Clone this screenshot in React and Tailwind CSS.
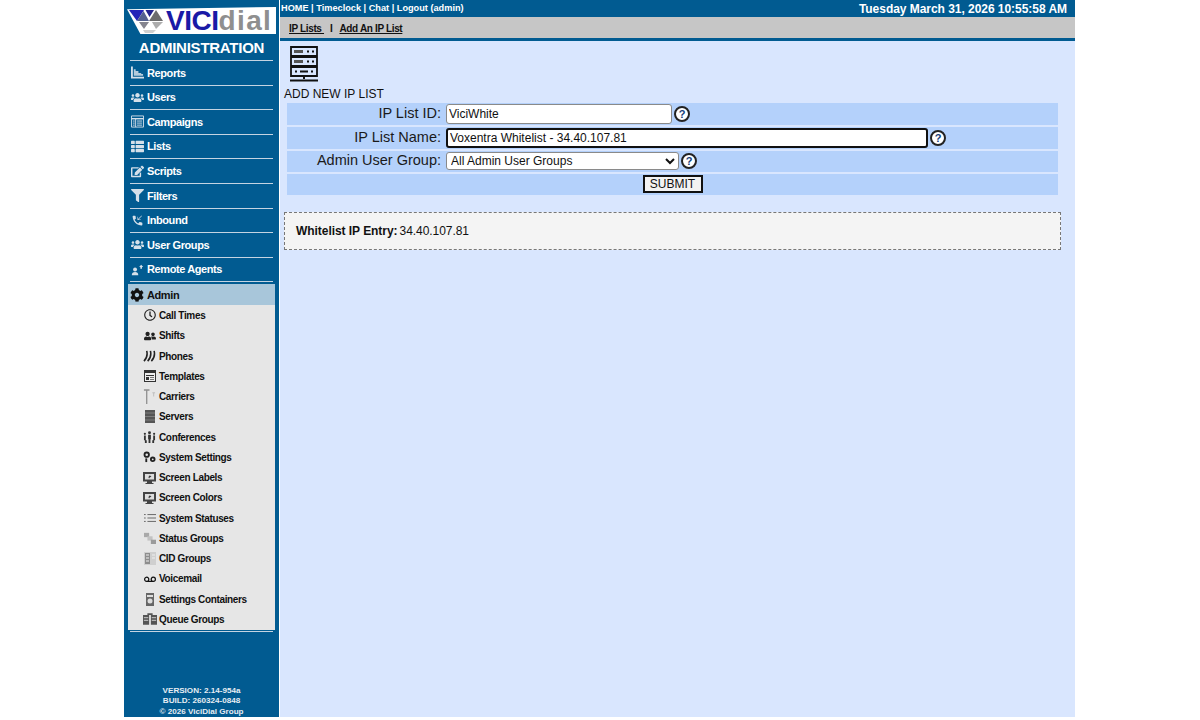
import React from 'react';
import { FaUsers, FaThList, FaEdit, FaFilter, FaCog, FaRegClock, FaUserFriends, FaVoicemail } from 'react-icons/fa';
import { MdPhoneCallback } from 'react-icons/md';

const ReportsIcon = () => (
  <svg viewBox="0 0 14 13" fill="currentColor">
    <path d="M0 0h2v11h12v2H0z" />
    <path d="M3 3h2v7H3zM5 5h3v5H5zM8 7h3v3H8zM11 8h2v2h-2z" opacity="0.85" />
  </svg>
);

const CampaignsIcon = () => (
  <svg viewBox="0 0 14 13" fill="none" stroke="currentColor">
    <path d="M.5 .5h13v12H.5z" strokeWidth="1" />
    <path d="M.5 3.500h13" strokeWidth="1.5" />
    <path d="M5 3.500v9M6.500 6h5.500M6.500 8.200h5.500M6.500 10.400h5.500M2 6h2M2 8.200h2M2 10.400h2" strokeWidth="1" />
  </svg>
);

const RemoteIcon = () => (
  <svg viewBox="0 0 16 14" fill="currentColor">
    <circle cx="5" cy="7" r="2.400" />
    <path d="M1 14c0-3 1.500-4 4-4s4 1 4 4z" />
    <path d="M12.500 1l2.500 3h-5zM11.500 4h2v2h-2z" />
  </svg>
);

const PhonesIcon = () => (
  <svg viewBox="0 0 14 13" className="w-[13px] h-[12px]" fill="none" stroke="currentColor" strokeWidth="1.700">
    <path d="M4 1c1 4 0 8-3 11M8 1c1 4 0 8-3 11M12 1c1 4 0 8-3 11" />
  </svg>
);

const TemplatesIcon = () => (
  <svg viewBox="0 0 12 12" className="w-[12px] h-[12px]">
    <path d="M0 0h12v12H0z" fill="#333" />
    <path d="M1 3h10v8H1z" fill="#eee" />
    <path d="M2 5h8v1H2zM2 7h3v3H2z" fill="#333" />
    <path d="M6 7h4v1H6zM6 9h4v1H6z" fill="#777" />
  </svg>
);

const CarriersIcon = () => (
  <svg viewBox="0 0 14 16" className="w-[13px] h-[15px]" fill="none" stroke="#8f8f8f">
    <path d="M1 1h6M4 1v15" strokeWidth="1.400" />
    <path d="M10 4h3M11.500 4v4" stroke="#bdbdbd" />
  </svg>
);

const ServersIcon = () => (
  <svg viewBox="0 0 10 13" className="w-[10px] h-[13px]">
    <path d="M0 0h10v13H0z" fill="#555" />
    <path d="M0 3h10M0 6.500h10M0 10h10" stroke="#888" strokeWidth="0.800" />
  </svg>
);

const ConferencesIcon = () => (
  <svg viewBox="0 0 14 13" className="w-[13px] h-[12px]" fill="currentColor">
    <circle cx="7" cy="2" r="1.600" />
    <path d="M5.500 4h3v5h-3zM6 9h2v4H6z" />
    <circle cx="2" cy="3" r="1.200" />
    <circle cx="12" cy="3" r="1.200" />
    <path d="M1 5h2v5h1v3H2v-3H1zM11 5h2v5h-1v3h-2v-3h1z" />
  </svg>
);

const GearsIcon = () => (
  <svg viewBox="0 0 14 13" className="w-[13px] h-[12px]" fill="none" stroke="currentColor" strokeWidth="2">
    <circle cx="4" cy="4" r="2.400" />
    <circle cx="10.500" cy="9" r="2" />
    <path d="M3.500 8v4" />
  </svg>
);

const ScreenIcon = () => (
  <svg viewBox="0 0 13 12" className="w-[13px] h-[12px]">
    <path d="M0 0h13v9.500H0zM4 9.500h5V11h1.500v1h-8v-1H4z" fill="#444" />
    <path d="M2 2h9v5.500H2z" fill="#ddd" />
    <path d="M7.500 2.500L5 5.500h1.500L5.500 7l3-3H7z" fill="#333" />
  </svg>
);

const StatusLinesIcon = () => (
  <svg viewBox="0 0 14 11" className="w-[12px] h-[10px]" stroke="#555">
    <path d="M4 1.500h10M4 5.500h10M4 9.500h10M0 1.500h2M0 5.500h2M0 9.500h2" />
  </svg>
);

const StatusGroupsIcon = () => (
  <svg viewBox="0 0 14 14" className="w-[12px] h-[12px]" fill="#a9a9a9">
    <path d="M0 1h6v5H0z" />
    <path d="M4 5h6v5H4z" fill="#c2c2c2" />
    <path d="M8 9h6v5H8z" fill="#9b9b9b" />
  </svg>
);

const CidIcon = () => (
  <svg viewBox="0 0 12 13" className="w-[12px] h-[13px]">
    <path d="M0 0h12v13H0z" fill="#cfcfcf" />
    <path d="M1 1h5v11H1z" fill="#8d8d8d" />
    <path d="M2 3h3M2 6h3M2 9h3M8 3h3M8 6h3" stroke="#eee" />
  </svg>
);

const ContainerIcon = () => (
  <svg viewBox="0 0 10 13" className="w-[10px] h-[13px]" fill="#666">
    <path d="M1 0h8v13H1z" />
    <circle cx="5" cy="8" r="2.500" fill="#ddd" />
    <path d="M2 2h6v2H2z" fill="#ddd" />
  </svg>
);

const QueueIcon = () => (
  <svg viewBox="0 0 16 13" className="w-[14px] h-[12px]" fill="#555">
    <path d="M0 2h7v11H0zM9 2h7v11H9zM5 0h6v2H5z" />
    <path d="M1 5h5M1 8h5M10 5h5M10 8h5" stroke="#ddd" />
  </svg>
);

const mainMenu = [
  ['Reports', ReportsIcon],
  ['Users', FaUsers],
  ['Campaigns', CampaignsIcon],
  ['Lists', FaThList],
  ['Scripts', FaEdit],
  ['Filters', FaFilter],
  ['Inbound', MdPhoneCallback],
  ['User Groups', FaUsers],
  ['Remote Agents', RemoteIcon],
];

const subMenu = [
  ['Call Times', FaRegClock, 'text-[#222]'],
  ['Shifts', FaUserFriends, 'text-[#222]'],
  ['Phones', PhonesIcon, 'text-[#222]'],
  ['Templates', TemplatesIcon, ''],
  ['Carriers', CarriersIcon, ''],
  ['Servers', ServersIcon, ''],
  ['Conferences', ConferencesIcon, 'text-[#333]'],
  ['System Settings', GearsIcon, 'text-[#222]'],
  ['Screen Labels', ScreenIcon, ''],
  ['Screen Colors', ScreenIcon, ''],
  ['System Statuses', StatusLinesIcon, ''],
  ['Status Groups', StatusGroupsIcon, ''],
  ['CID Groups', CidIcon, ''],
  ['Voicemail', FaVoicemail, 'text-[#111]'],
  ['Settings Containers', ContainerIcon, ''],
  ['Queue Groups', QueueIcon, ''],
];

const Logo = () => (
  <div className="ml-[3px] mt-[7px] w-[149px] h-[27px] bg-white flex items-center [clip-path:polygon(0_8%,100%_0,100%_100%,9%_100%)]">
    <svg viewBox="0 0 39 27" className="w-[39px] h-[27px] shrink-0">
      <path d="M2 3h15l-7 11z" fill="#2424b8" />
      <path d="M18.500 3H27l-4.500 7z" fill="#23238f" />
      <path d="M29 3l7 11H22z" fill="#6c6c6c" />
      <path d="M10 14h12L16.500 4z" fill="#54618f" />
      <path d="M12 15h10l-5 7z" fill="#85858f" />
      <path d="M25 15h11l-7 7z" fill="#adadad" />
      <path d="M16 23h13l-3 3h-8z" fill="#cfcfcf" />
    </svg>
    <span className="text-[28px] leading-[28px] font-bold text-[#1a1aa6] tracking-[-0.5px]">VICI</span>
    <span className="text-[28px] leading-[28px] font-bold text-[#8f8f8f] tracking-[1.400px]">dial</span>
  </div>
);

const MenuRow = ({ label, icon: Icon }) => (
  <div className="h-[24.6px] border-b border-[#c4d4e2] flex items-center text-white text-[11px] font-bold tracking-[-0.4px]">
    <span className="w-[17px] pr-[3px] flex justify-center text-[#d5e0ea] [&_svg]:w-[13px] [&_svg]:h-[13px]">
      <Icon />
    </span>
    {label}
  </div>
);

const SubRow = ({ label, icon: Icon, color }) => (
  <div className="h-[20.27px] flex items-center pl-[14px] gap-[2px] text-[#111] text-[10px] font-bold tracking-[-0.35px]">
    <span className={`w-[15px] flex justify-center text-[12px] ${color}`}>
      <Icon />
    </span>
    {label}
  </div>
);

const Sidebar = () => (
  <aside className="w-[155px] shrink-0 bg-[#015b91] flex flex-col">
    <Logo />
    <div className="mx-[6px] mt-[2px] w-[143px]">
      <div className="h-[25px] border-b border-[#c4d4e2] flex items-center justify-center text-white text-[15px] font-bold tracking-[-0.25px]">
        ADMINISTRATION
      </div>
      {mainMenu.map(([label, icon]) => (
        <MenuRow key={label} label={label} icon={icon} />
      ))}
    </div>
    <div className="ml-[4px] mt-[2px] w-[147px] bg-[#e6e6e6]">
      <div className="h-[21px] bg-[#a8c6da] flex items-center gap-[2px] pl-[2px] text-[#111] text-[11px] font-bold tracking-[-0.4px]">
        <FaCog className="w-[14px] h-[14px] text-[#111]" />
        <span className="ml-[1px]">Admin</span>
      </div>
      {subMenu.map(([label, icon, color]) => (
        <SubRow key={label} label={label} icon={icon} color={color} />
      ))}
    </div>
    <div className="mx-[6px] mt-[1px] w-[143px] border-b border-[#c4d4e2]" />
    <div className="mt-auto text-center text-[#e6edf3] text-[8.1px] leading-[10.3px] font-bold">
      <div>VERSION: 2.14-954a</div>
      <div>BUILD: 260324-0848</div>
      <div>© 2026 ViciDial Group</div>
    </div>
  </aside>
);

const HelpIcon = () => (
  <span className="w-[16px] h-[16px] rounded-full border-2 border-[#222] bg-white flex items-center justify-center text-[11px] leading-none font-bold text-[#14407a]">
    ?
  </span>
);

const FormRow = ({ label, className, children }) => (
  <div className={`flex gap-[1px] ${className}`}>
    <div className="w-[155px] flex items-center justify-end pr-[1px] text-[14.5px] text-[#1a1a1a] whitespace-nowrap">{label}</div>
    <div className="flex-1 flex items-center gap-[2px] pl-[3px]">{children}</div>
  </div>
);

const ServerGlyph = () => (
  <svg viewBox="0 0 28 36" className="w-[28px] h-[36px]" fill="none" stroke="#111" strokeWidth="1.800">
    <path d="M1 1h26v9H1zM1 11h26v9H1zM1 21h26v9H1z" />
    <path d="M4 4h9v3H4zM4 14h9v3H4z" fill="#555" stroke="none" />
    <path d="M17 5.500h2M22 5.500h2M17 15.500h2M22 15.500h2M5 25.500h2M10 25.500h8M21 25.500h2" strokeWidth="2" />
    <path d="M14 30v3M0 34.500h28" strokeWidth="2" />
  </svg>
);

export default function App() {
  return (
    <div className="min-h-screen bg-white font-['Liberation_Sans',Arial,sans-serif]">
      <div className="ml-[124px] w-[951px] h-[717px] flex">
        <Sidebar />
        <main className="flex-1 flex flex-col ml-[1px] bg-[#d9e6fe]">
          <div className="h-[17px] bg-[#015b91] flex items-center justify-between pl-[1px] pr-[8px] text-white font-bold">
            <span className="text-[9.2px]">HOME | Timeclock | Chat | Logout (admin)</span>
            <span className="text-[12px] tracking-[-0.04px]">Tuesday March 31, 2026 10:55:58 AM</span>
          </div>
          <div className="h-[21px] bg-[#c6c6c6] flex items-center pl-[9px] pt-[2px] text-[10px] font-bold text-[#111] tracking-[-0.35px]">
            <span className="underline">IP Lists&nbsp;</span>
            <span className="mx-[6px]">I</span>
            <span className="underline ml-[1px]">Add An IP List</span>
          </div>
          <div className="h-[3px] bg-[#015b91]" />
          <div className="flex-1 pl-[4px] pr-[14px] pt-[5px]">
            <div className="pl-[6px]">
              <ServerGlyph />
            </div>
            <div className="mt-[5px] h-[14px] text-[12px] leading-[14px] text-[#111]">ADD NEW IP LIST</div>
            <div className="ml-[3px] mr-[3px] mt-[2px] flex flex-col gap-[2px]">
              <FormRow label="IP List ID:" className="h-[22px] bg-[#b4d1fb]">
                <input readOnly value="ViciWhite" className="w-[226px] h-[20px] px-[2px] bg-white border border-[#8a8a8a] rounded-[3px] text-[12px] text-[#111] outline-none" />
                <HelpIcon />
              </FormRow>
              <FormRow label="IP List Name:" className="h-[22px] bg-[#b4d1fb]">
                <input readOnly value="Voxentra Whitelist - 34.40.107.81" className="w-[482px] h-[20px] px-[2px] bg-white border-2 border-[#111] rounded-[3px] text-[12px] text-[#111] outline-none" />
                <HelpIcon />
              </FormRow>
              <FormRow label="Admin User Group:" className="h-[21px] pb-[1px] bg-[#b4d1fb]">
                <select defaultValue="all" className="w-[233px] h-[18px] bg-white border border-[#8a8a8a] rounded-[3px] text-[12px] text-[#111]">
                  <option value="all">All Admin User Groups</option>
                </select>
                <HelpIcon />
              </FormRow>
              <div className="h-[21px] pb-[1px] bg-[#b4d1fb] flex items-center justify-center">
                <button className="w-[60px] h-[18px] bg-[#f2f2f2] border-2 border-[#111] text-[12px] leading-none text-[#111]">
                  SUBMIT
                </button>
              </div>
            </div>
            <div className="mt-[17px] h-[38px] flex items-center pl-[11px] gap-[2px] bg-[#f4f4f4] border border-dashed border-[#777] text-[12px] tracking-[-0.05px] text-[#111]">
              <span className="font-bold">Whitelist IP Entry:</span>
              <span>34.40.107.81</span>
            </div>
          </div>
        </main>
      </div>
    </div>
  );
}
